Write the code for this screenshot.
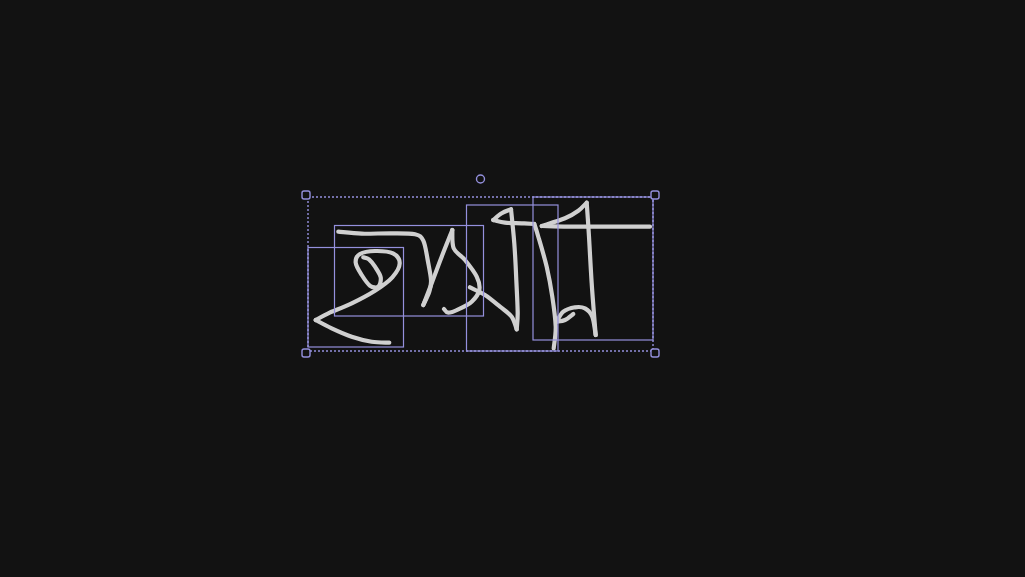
const left = ([x, y]) => [x / 3 + 295, y / 3 + 170];
const right = ([x, y]) => [x / 3 + 475, y / 3 + 170];

const smooth = (pts) => {
  let d = `M${pts[0][0].toFixed(1)} ${pts[0][1].toFixed(1)}`;
  for (let i = 0; i < pts.length - 1; i++) {
    const p0 = pts[i - 1] || pts[i];
    const p1 = pts[i];
    const p2 = pts[i + 1];
    const p3 = pts[i + 2] || p2;
    const c1 = [p1[0] + (p2[0] - p0[0]) / 6, p1[1] + (p2[1] - p0[1]) / 6];
    const c2 = [p2[0] - (p3[0] - p1[0]) / 6, p2[1] - (p3[1] - p1[1]) / 6];
    d += `C${c1[0].toFixed(1)} ${c1[1].toFixed(1)} ${c2[0].toFixed(1)} ${c2[1].toFixed(1)} ${p2[0].toFixed(1)} ${p2[1].toFixed(1)}`;
  }
  return d;
};

// Each stroke is split at its sharp corners, so that the corners stay sharp.
const leftStrokes = [
  [[283,518],[230,515],[170,500],[110,475],[62,450]],
  [[62,450],[100,430],[170,400],[240,362],[292,322],[314,280],[294,250],[240,243],[195,252],[182,278],[200,315],[225,347],[250,350],[257,322],[240,290],[222,268],[205,262]],
  [[130,185],[200,191],[290,190],[360,193],[385,212],[398,270],[408,330],[403,365],[385,405]],
  [[385,405],[410,340],[440,260],[472,180]],
  [[472,180],[476,235],[510,270],[545,320],[553,360],[530,395],[490,418],[460,428],[447,417]],
];
const rightStrokes = [
  [[-15,352],[30,375],[75,410],[110,440],[125,478]],
  [[125,478],[128,430],[124,330],[118,220],[108,118]],
  [[108,118],[80,130],[55,150]],
  [[55,150],[90,158],[140,160],[178,162]],
  [[178,162],[190,200],[215,290],[232,380],[242,470],[236,535]],
  [[525,170],[400,170],[280,170],[200,168]],
  [[200,168],[270,145],[310,122],[335,98]],
  [[335,98],[342,200],[350,340],[362,495]],
  [[362,495],[352,440],[330,415],[300,412],[265,425],[245,455]],
  [[245,455],[270,450],[295,432]],
];
const strokes = [
  ...leftStrokes.map((s) => s.map(left)),
  ...rightStrokes.map((s) => s.map(right)),
].map(smooth);

const boxes = [
  [308, 247.5, 95.5, 99.5],
  [334.5, 225.5, 149, 90.5],
  [466.5, 205, 91.5, 146],
  [533, 197, 120, 143],
];
const handles = [[306, 195], [655, 195], [306, 353], [655, 353]];

export default function App() {
  const ink = "#d0d0d0";
  const line = "#9490dd";
  return (
    <div className="h-screen w-full overflow-hidden bg-[#121212]">
      <svg className="block h-full w-full" viewBox="0 0 1025 577" fill="none">
        {strokes.map((d) => (
          <path key={d} d={d} stroke={ink} strokeWidth="4.2" strokeLinecap="round" strokeLinejoin="round" />
        ))}
        {boxes.map(([x, y, w, h]) => (
          <rect key={x} x={x} y={y} width={w} height={h} stroke={line} strokeWidth="1.2" />
        ))}
        <rect x="308" y="197" width="345" height="154" stroke={line} strokeWidth="1.4" strokeDasharray="2 2" />
        {handles.map(([x, y]) => (
          <rect key={x + "-" + y} x={x - 4} y={y - 4} width="8" height="8" rx="2" fill="#121212" stroke={line} strokeWidth="1.4" />
        ))}
        <circle cx="480.5" cy="179" r="4" fill="#121212" stroke={line} strokeWidth="1.4" />
      </svg>
    </div>
  );
}
